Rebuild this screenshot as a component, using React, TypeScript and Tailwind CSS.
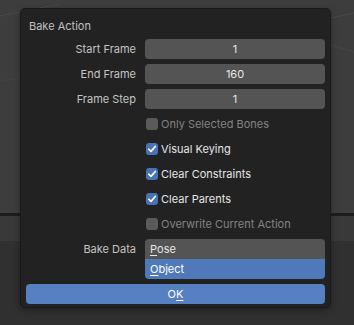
const font = { fontFamily: 'Inter, "DejaVu Sans", sans-serif' };

function Check({ on, dim, label }: { on: boolean; dim?: boolean; label: string }) {
    return (
        <div className="flex h-[20px] items-center">
            <div className="w-[110px]" />
            <div className="ml-[9px] flex items-center">
                <div
                    className={
                        on
                            ? 'ml-px flex h-[12px] w-[12px] items-center justify-center rounded-[3px] bg-[#4772b3]'
                            : 'ml-px h-[12px] w-[12px] rounded-[3px] bg-[#5a5a5a]'
                    }
                >
                    {on && (
                        <svg width="12" height="12" viewBox="0 0 12 12">
                            <path d="M2.8 6.2 L5 8.4 L9.4 3.4" fill="none" stroke="#ffffff" strokeWidth="1.6" strokeLinecap="round" strokeLinejoin="round" />
                        </svg>
                    )}
                </div>
                <span className={dim ? 'ml-[3px] text-[#838383]' : 'ml-[3px] text-[#e6e6e6]'}>{label}</span>
            </div>
        </div>
    );
}

function Field({ label, value }: { label: string; value: string }) {
    return (
        <div className="flex h-[20px] items-center">
            <div className="w-[110px] text-right text-[#c4c4c4]">{label}</div>
            <div className="ml-[9px] flex h-[20px] w-[180px] items-center justify-center rounded-[4px] bg-[#545454] text-[#e6e6e6]">
                {value}
            </div>
        </div>
    );
}

export default function App() {
    return (
        <div className="relative h-[325px] w-[354px] overflow-hidden bg-[#3d3d3d] text-[11px]" style={font}>
            <div className="flex h-full flex-col">
                <div className="h-[213px]" />
                <div className="h-[3px] bg-[#1d1d1d]" />
                <div className="h-[25px] bg-[#393939]" />
                <div className="flex-1 bg-[#303030]" />
            </div>
            <svg className="absolute left-0 top-0" width="354" height="213">
                <line x1="0" y1="16" x2="60" y2="4" stroke="#4a4a4a" strokeWidth="1" />
                <line x1="0" y1="81" x2="40" y2="75" stroke="#444444" strokeWidth="1" />
                <line x1="300" y1="25" x2="354" y2="13" stroke="#4a4a4a" strokeWidth="1" />
                <line x1="300" y1="35" x2="354" y2="52" stroke="#474747" strokeWidth="1" />
            </svg>

            <div className="absolute left-[20px] top-[8px] flex h-[300px] w-[311px] flex-col rounded-[5px] border border-[#1a1a1a] bg-[#222222] px-[5px] shadow-[0_2px_6px_rgba(0,0,0,0.35)]">
                <div className="flex h-[30px] items-center pl-[3px] pt-[4px] text-[#c0c0c0]">Bake Action</div>
                <div className="flex flex-col gap-[5px]">
                    <Field label="Start Frame" value="1" />
                    <Field label="End Frame" value="160" />
                    <Field label="Frame Step" value="1" />
                    <Check on={false} dim label="Only Selected Bones" />
                    <Check on label="Visual Keying" />
                    <Check on label="Clear Constraints" />
                    <Check on label="Clear Parents" />
                    <Check on={false} dim label="Overwrite Current Action" />
                    <div className="flex">
                        <div className="flex h-[20px] w-[110px] items-center justify-end text-[#c4c4c4]">Bake Data</div>
                        <div className="ml-[9px] flex w-[180px] flex-col overflow-hidden rounded-[4px]">
                            <div className="flex h-[20px] items-center bg-[#545454] pl-[5px] text-[#e6e6e6]">
                                <span className="underline underline-offset-2">P</span>ose
                            </div>
                            <div className="flex h-[20px] items-center bg-[#5079ba] pl-[5px] text-[#ffffff]">
                                <span className="underline underline-offset-2">O</span>bject
                            </div>
                        </div>
                    </div>
                </div>
                <div className="mt-[5px] flex h-[20px] items-center justify-center rounded-[4px] bg-[#5680c2] text-[#ffffff]">
                    O<span className="underline underline-offset-2">K</span>
                </div>
            </div>
        </div>
    );
}
